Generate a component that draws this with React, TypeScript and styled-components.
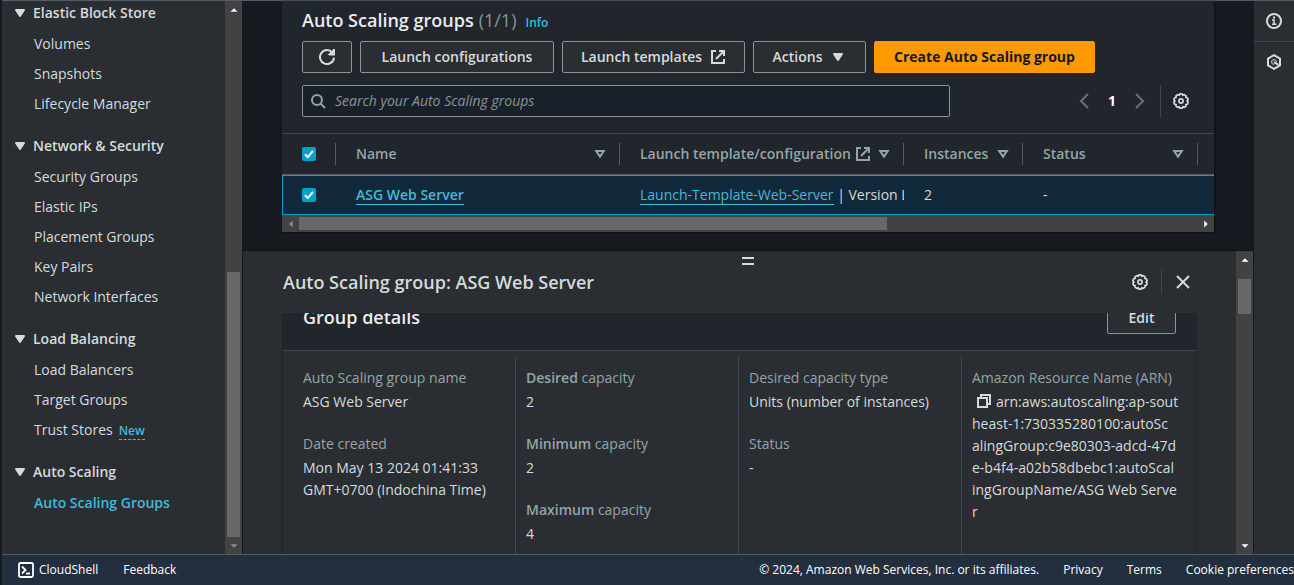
import React from 'react';
import styled, { createGlobalStyle, css } from 'styled-components';

const color = {
  page: '#16191f',
  panel: '#2a2e33',
  card: '#21252c',
  line: '#414750',
  divider: '#545b64',
  outline: '#879596',
  text: '#d5dbdb',
  muted: '#95a5a6',
  bright: '#eaeded',
  link: '#44b9d6',
  accent: '#00a1c9',
  track: '#424242',
  thumb: '#686868',
};

const GlobalStyle = createGlobalStyle`
  *, *::before, *::after { box-sizing: border-box; }
  body {
    margin: 0;
    background: ${color.page};
    color: ${color.text};
    font: 14px/22px "Open Sans", "Noto Sans", sans-serif;
    overflow: hidden;
  }
  h2, h3, ul, dl, dd, p { margin: 0; padding: 0; }
  h2, h3, b { font-weight: 600; }
  ul { list-style: none; }
  a { color: inherit; text-decoration: none; }
  button, input { font: inherit; color: inherit; }
  svg { display: block; flex: none; }
`;

/* ---------- icons ---------- */

const Svg = styled.svg.attrs({ viewBox: '0 0 16 16', 'aria-hidden': true })<{ $size?: number; $w?: number }>`
  width: ${p => p.$size ?? 16}px;
  height: ${p => p.$size ?? 16}px;
  fill: none;
  stroke: currentColor;
  stroke-width: ${p => p.$w ?? 2};
`;

const CaretFilled = () => (
  <Svg><path d="M4 5h8l-4 6z" fill="currentColor" strokeLinejoin="round" /></Svg>
);
const CaretHollow = () => (
  <Svg><path d="M4.2 5h7.6L8 10.6z" /></Svg>
);
const RefreshIcon = () => (
  <Svg><path d="M15 8.6A7 7 0 1 1 13.4 3.6" /><path d="M15 0v5.5H10" /><path d="M11 5 14.5 1.5V5z" fill="currentColor" /></Svg>
);
const ExternalIcon = () => (
  <Svg><path d="M6 2H2v12h12v-4" /><path d="M9 2h5v5" /><path d="M6 10l8-8" /></Svg>
);
const SearchIcon = () => (
  <Svg><circle cx="7" cy="7" r="5" /><path d="M10.6 10.6 15 15" /></Svg>
);
const ChevronIcon = ({ flip = false }: { flip?: boolean }) => (
  <Svg><path d={flip ? 'M4 1l7 7-7 7' : 'M12 1L5 8l7 7'} /></Svg>
);
const CloseIcon = () => (
  <Svg><path d="M2 2l12 12M14 2L2 14" /></Svg>
);
const CopyIcon = () => (
  <Svg><path d="M2 5h9v9H2z" /><path d="M5 5V2h9v9h-3" /></Svg>
);
const gear = Array.from({ length: 10 }, (_, i) => {
  const at = (r: number, deg: number) => {
    const a = (deg * Math.PI) / 180;
    return `${(8 + r * Math.cos(a)).toFixed(2)} ${(8 + r * Math.sin(a)).toFixed(2)}`;
  };
  const d = i * 36 - 90;
  return `${i ? 'L' : 'M'}${at(6, d - 18)}L${at(7.2, d - 9)}L${at(7.2, d + 9)}`;
}).join('') + 'Z';
const SettingsIcon = () => (
  <Svg $w={1.7}><path d={gear} strokeLinejoin="round" /><circle cx="8" cy="8" r="2.1" /></Svg>
);
const InfoIcon = () => (
  <Svg><circle cx="8" cy="8" r="7" /><path d="M6 7h2v4M6 11.2h4.4" strokeWidth="1.6" /><path d="M7 4.5h2" /></Svg>
);
const HexIcon = () => (
  <Svg><path d="M8 1.2l6 3.4v6.8l-6 3.4-6-3.4V4.6z" /><path d="M8 10.4A2.4 2.4 0 1 1 10.4 8" strokeWidth="1" /><path d="M8 8.2l4.5 2.6" /></Svg>
);
const ShellIcon = () => (
  <Svg $w={1.8}><rect x="1" y="1" width="14" height="14" rx="1.5" /><path d="M4 4.5L7.5 8 4 11.5M8 11.5h4" /></Svg>
);

/* ---------- shell ---------- */

const Page = styled.div`
  display: flex;
  flex-direction: column;
  height: 100vh;
  padding-left: 2px;
`;
const Body = styled.div`
  display: flex;
  flex: 1;
  min-height: 0;
  border-top: 1px solid ${color.divider};
`;

/* ---------- scrollbars ---------- */

const Bar = styled.div<{ $axis: 'x' | 'y' }>`
  display: flex;
  flex: none;
  align-items: stretch;
  background: ${color.track};
  ${p => (p.$axis === 'y'
    ? css`flex-direction: column; width: 17px; padding: 0 2px;`
    : css`height: 17px; padding: 2px 0;`)}
`;
const Arrow = styled.span<{ $dim?: boolean }>`
  display: grid;
  place-items: center;
  flex: 0 0 17px;
  color: ${p => (p.$dim ? '#8b8b8b' : '#ffffff')};
`;
const Track = styled.div`
  display: flex;
  flex-direction: inherit;
  flex: 1;
`;
const Before = styled.div`
  flex: none;
`;
const Thumb = styled.div`
  flex: none;
  background: ${color.thumb};
`;
const arrowPaths = { up: 'M4 10h8L8 6z', down: 'M4 6h8l-4 4z', left: 'M10 4v8L6 8z', right: 'M6 4v8l4-4z' };
const ArrowMark = ({ to, dim }: { to: keyof typeof arrowPaths; dim?: boolean }) => (
  <Arrow $dim={dim}><Svg $size={14} $w={0}><path d={arrowPaths[to]} fill="currentColor" /></Svg></Arrow>
);
const Scrollbar = ({ axis, start, size, dim }: { axis: 'x' | 'y'; start: number; size: number; dim?: 'start' | 'end' }) => (
  <Bar $axis={axis} aria-hidden>
    <ArrowMark to={axis === 'y' ? 'up' : 'left'} dim={dim === 'start'} />
    <Track>
      <Before style={{ flexBasis: `${start}%` }} />
      <Thumb style={{ flexBasis: `${size}%` }} />
    </Track>
    <ArrowMark to={axis === 'y' ? 'down' : 'right'} dim={dim === 'end'} />
  </Bar>
);

/* ---------- side navigation ---------- */

const Side = styled.aside`
  display: flex;
  flex: 0 0 241px;
  background: ${color.panel};
  border-right: 1px solid ${color.page};
`;
const Nav = styled.nav`
  display: flex;
  flex-direction: column;
  gap: 20px;
  flex: 1;
  padding: 1px 0 0 10px;
`;
const NavHeading = styled.h3`
  display: flex;
  align-items: center;
  gap: 5px;
  margin-bottom: 9px;
  font-size: 14px;
  line-height: 22px;
`;
const NavList = styled.ul`
  display: flex;
  flex-direction: column;
  gap: 8px;
  padding-left: 22px;
  li { height: 22px; }
`;
const NavLink = styled.a<{ $active?: boolean }>`
  ${p => p.$active && css`color: ${color.link}; font-weight: 600;`}
`;
const NewTag = styled.a`
  margin-left: 6px;
  font-size: 12px;
  font-weight: 600;
  color: ${color.link};
  border-bottom: 1px dashed ${color.link};
`;

const sections = [
  { title: 'Elastic Block Store', items: ['Volumes', 'Snapshots', 'Lifecycle Manager'] },
  { title: 'Network & Security', items: ['Security Groups', 'Elastic IPs', 'Placement Groups', 'Key Pairs', 'Network Interfaces'] },
  { title: 'Load Balancing', items: ['Load Balancers', 'Target Groups', 'Trust Stores'] },
  { title: 'Auto Scaling', items: ['Auto Scaling Groups'] },
];

/* ---------- groups list ---------- */

const Main = styled.main`
  display: flex;
  flex-direction: column;
  flex: 1;
  min-width: 0;
`;
const ListArea = styled.div`
  flex: none;
  padding: 0 39px 18px;
`;
const Card = styled.section`
  background: ${color.card};
  box-shadow: 0 1px 1px 0 #0f1114, 1px 0 1px 0 #0f1114;
`;
const CardHead = styled.div`
  display: flex;
  flex-direction: column;
  padding: 8px 20px 16px;
`;
const Title = styled.h2`
  display: flex;
  align-items: baseline;
  gap: 5px;
  height: 22px;
  margin-bottom: 10px;
  font-size: 18px;
  line-height: 22px;
  color: ${color.bright};
`;
const Count = styled.span`
  font-weight: 400;
  color: ${color.outline};
`;
const InfoLink = styled.a`
  margin-left: 4px;
  font-size: 12px;
  font-weight: 600;
  color: ${color.link};
`;
const Row = styled.div<{ $gap?: number }>`
  display: flex;
  align-items: center;
  gap: ${p => p.$gap ?? 8}px;
`;
const Button = styled.button<{ $primary?: boolean; $width?: number }>`
  display: flex;
  align-items: center;
  justify-content: center;
  gap: 8px;
  height: 32px;
  width: ${p => (p.$width ? `${p.$width}px` : 'auto')};
  padding: 0;
  border: 1px solid ${p => (p.$primary ? '#ff9900' : color.outline)};
  border-radius: 2px;
  background: ${p => (p.$primary ? '#ff9900' : color.panel)};
  color: ${p => (p.$primary ? color.page : color.text)};
  font-weight: ${p => (p.$primary ? 700 : 600)};
  white-space: nowrap;
`;
const IconButton = styled.button<{ $dim?: boolean }>`
  display: flex;
  padding: 0;
  border: 0;
  background: none;
  color: ${p => (p.$dim ? '#687078' : color.text)};
`;
const Filter = styled(Row)`
  margin-top: 12px;
  justify-content: space-between;
`;
const SearchBox = styled.label`
  display: flex;
  align-items: center;
  gap: 9px;
  flex: 0 1 648px;
  height: 32px;
  padding: 0 7px;
  border: 1px solid ${color.outline};
  border-radius: 2px;
  background: #1a2029;
  color: ${color.muted};
`;
const SearchInput = styled.input`
  flex: 1;
  min-width: 0;
  padding: 0;
  border: 0;
  outline: 0;
  background: none;
  &::placeholder { color: ${color.outline}; font-style: italic; opacity: 1; }
`;
const Pager = styled(Row)`
  padding-right: 5px;
`;
const PageNumber = styled.button`
  width: 24px;
  padding: 0;
  border: 0;
  background: none;
  color: #ffffff;
  font-weight: 700;
`;
const Rule = styled.span<{ $h: number }>`
  width: 1px;
  height: ${p => p.$h}px;
  background: ${color.line};
`;

const TableClip = styled.div`
  overflow: hidden;
`;
const Table = styled.table`
  width: 1423px;
  table-layout: fixed;
  border-collapse: separate;
  border-spacing: 0;
`;
const Th = styled.th<{ $w?: number }>`
  width: ${p => (p.$w ? `${p.$w}px` : 'auto')};
  height: 42px;
  padding: 0;
  border-top: 1px solid ${color.line};
  border-bottom: 1px solid ${color.divider};
  color: ${color.muted};
  font-weight: 600;
  text-align: left;
`;
const ThInner = styled.div<{ $check?: boolean }>`
  display: flex;
  align-items: center;
  justify-content: space-between;
  height: 22px;
  padding: ${p => (p.$check ? '0 0 0 20px' : '0 11px 0 20px')};
  border-right: 1px solid ${color.divider};
  white-space: nowrap;
`;
const Td = styled.td`
  height: 40px;
  padding: 0 0 0 20px;
  border: 1px solid ${color.accent};
  border-width: 1px 0;
  background: #12293b;
  overflow: hidden;
  white-space: nowrap;
  &:first-child { border-left-width: 1px; padding-left: 19px; }
`;
const Check = styled.input.attrs({ type: 'checkbox', defaultChecked: true })`
  appearance: none;
  display: block;
  width: 14px;
  height: 14px;
  margin: 0;
  border-radius: 2px;
  background: ${color.accent} url("data:image/svg+xml,%3Csvg xmlns='http://www.w3.org/2000/svg' viewBox='0 0 14 14'%3E%3Cpath d='M3 7.2l2.8 2.9L11 3.8' fill='none' stroke='white' stroke-width='2'/%3E%3C/svg%3E");
`;
const CellLink = styled.a<{ $bold?: boolean }>`
  color: ${color.link};
  font-weight: ${p => (p.$bold ? 600 : 400)};
  border-bottom: 1px solid ${color.link};
`;

/* ---------- split panel ---------- */

const Split = styled.section`
  display: flex;
  flex: 1;
  min-height: 0;
  border-top: 1px solid #0f1114;
  background: ${color.panel};
`;
const SplitMain = styled.div`
  display: flex;
  flex-direction: column;
  flex: 1;
  min-width: 0;
`;
const Handle = styled.button`
  align-self: center;
  flex: none;
  width: 12px;
  height: 8px;
  margin: 6px 0 0 16px;
  padding: 0;
  border: 2px solid ${color.text};
  border-width: 2px 0;
  background: none;
`;
const SplitHead = styled.header`
  display: flex;
  align-items: center;
  justify-content: space-between;
  flex: none;
  height: 48px;
  padding: 0 45px 14px 40px;
`;
const SplitTitle = styled.h2`
  font-size: 18px;
  line-height: 22px;
`;
const SplitBody = styled.div`
  flex: 1;
  min-height: 0;
  overflow: hidden;
  padding: 0 39px;
`;
const Details = styled.div`
  min-height: 100%;
  margin-top: -20px;
  border: 1px solid #1f2227;
  border-bottom: 0;
`;
const DetailsHead = styled.div`
  display: flex;
  align-items: center;
  justify-content: space-between;
  height: 57px;
  padding: 0 20px 9px;
  background: ${color.card};
  border-bottom: 1px solid ${color.line};
  h3 { font-size: 18px; line-height: 22px; padding-bottom: 2px; color: ${color.bright}; }
`;
const Columns = styled.div`
  display: grid;
  grid-template-columns: repeat(4, minmax(0, 1fr));
  padding: 6px 12px 0 9px;
`;
const Column = styled.dl`
  display: flex;
  flex-direction: column;
  gap: 20px;
  height: 220px;
  padding: 10px 10px 0 11px;
  & + & { border-left: 1px solid ${color.line}; padding-left: 10px; }
`;
const Term = styled.dt`
  margin-bottom: 2px;
  color: ${color.muted};
`;
const Arn = styled.dd`
  white-space: nowrap;
  svg { display: inline-block; vertical-align: -2px; margin: 0 4px; }
`;

/* ---------- tools rail and footer ---------- */

const Rail = styled.aside`
  flex: 0 0 41px;
  background: ${color.panel};
  border-left: 1px solid ${color.page};
`;
const RailButton = styled(IconButton)`
  justify-content: center;
  align-items: center;
  width: 100%;
  height: 40px;
  & + & { height: 41px; border-top: 1px solid ${color.line}; }
`;
const Footer = styled.footer`
  display: flex;
  align-items: center;
  flex: none;
  height: 31px;
  border-top: 1px solid ${color.divider};
  background: #232f3e;
  color: #ffffff;
  font-size: 12px;
  white-space: nowrap;
  overflow: hidden;
`;
const FooterLeft = styled(Row)`
  padding-left: 16px;
  a { display: flex; align-items: center; gap: 5px; }
`;
const FooterRight = styled(Row)`
  margin-left: auto;
`;

const Pair = ({ label, children }: { label: React.ReactNode; children: React.ReactNode }) => (
  <div><Term>{label}</Term><dd>{children}</dd></div>
);

const headers = [
  { label: 'Name', width: 284 },
  { label: 'Launch template/configuration', width: 284, external: true },
  { label: 'Instances', width: 119 },
  { label: 'Status', width: 175 },
];

export default function App() {
  return (
    <Page>
      <GlobalStyle />
      <Body>
        <Side>
          <Nav aria-label="EC2">
            {sections.map(s => (
              <div key={s.title}>
                <NavHeading><CaretFilled />{s.title}</NavHeading>
                <NavList>
                  {s.items.map(item => (
                    <li key={item}>
                      <NavLink href="#" $active={item === 'Auto Scaling Groups'}>{item}</NavLink>
                      {item === 'Trust Stores' && <NewTag href="#">New</NewTag>}
                    </li>
                  ))}
                </NavList>
              </div>
            ))}
          </Nav>
          <Scrollbar axis="y" start={49} size={51} dim="end" />
        </Side>

        <Main>
          <ListArea>
            <Card>
              <CardHead>
                <Title>Auto Scaling groups <Count>(1/1)</Count><InfoLink href="#">Info</InfoLink></Title>
                <Row>
                  <Button $width={50} aria-label="Refresh"><RefreshIcon /></Button>
                  <Button $width={194}>Launch configurations</Button>
                  <Button $width={183}>Launch templates <ExternalIcon /></Button>
                  <Button $width={113}>Actions <CaretFilled /></Button>
                  <Button $width={221} $primary>Create Auto Scaling group</Button>
                </Row>
                <Filter>
                  <SearchBox>
                    <SearchIcon />
                    <SearchInput type="text" placeholder="Search your Auto Scaling groups" aria-label="Search your Auto Scaling groups" />
                  </SearchBox>
                  <Pager $gap={12}>
                    <Row>
                      <IconButton $dim aria-label="Previous page"><ChevronIcon /></IconButton>
                      <PageNumber>1</PageNumber>
                      <IconButton $dim aria-label="Next page"><ChevronIcon flip /></IconButton>
                    </Row>
                    <Rule $h={32} />
                    <IconButton aria-label="Preferences"><SettingsIcon /></IconButton>
                  </Pager>
                </Filter>
              </CardHead>
              <TableClip>
                <Table>
                  <thead>
                    <tr>
                      <Th $w={54}><ThInner $check><Check aria-label="Select all" /></ThInner></Th>
                      {headers.map(h => (
                        <Th key={h.label} $w={h.width}>
                          <ThInner>
                            <Row $gap={4}>{h.label}{h.external && <ExternalIcon />}</Row>
                            <CaretHollow />
                          </ThInner>
                        </Th>
                      ))}
                      <Th />
                    </tr>
                  </thead>
                  <tbody>
                    <tr>
                      <Td><Check aria-label="Select ASG Web Server" /></Td>
                      <Td><CellLink href="#" $bold>ASG Web Server</CellLink></Td>
                      <Td><CellLink href="#">Launch-Template-Web-Server</CellLink> | Version Latest</Td>
                      <Td>2</Td>
                      <Td>-</Td>
                      <Td />
                    </tr>
                  </tbody>
                </Table>
              </TableClip>
              <Scrollbar axis="x" start={0} size={65.5} dim="start" />
            </Card>
          </ListArea>

          <Split>
            <SplitMain>
              <Handle aria-label="Resize panel" />
              <SplitHead>
                <SplitTitle>Auto Scaling group: ASG Web Server</SplitTitle>
                <Row $gap={13}>
                  <IconButton aria-label="Panel preferences"><SettingsIcon /></IconButton>
                  <Rule $h={24} />
                  <IconButton aria-label="Close panel"><CloseIcon /></IconButton>
                </Row>
              </SplitHead>
              <SplitBody>
                <Details>
                  <DetailsHead>
                    <h3>Group details</h3>
                    <Button $width={69}>Edit</Button>
                  </DetailsHead>
                  <Columns>
                    <Column>
                      <Pair label="Auto Scaling group name">ASG Web Server</Pair>
                      <Pair label="Date created">Mon May 13 2024 01:41:33<br />GMT+0700 (Indochina Time)</Pair>
                    </Column>
                    <Column>
                      <Pair label={<><b>Desired</b> capacity</>}>2</Pair>
                      <Pair label={<><b>Minimum</b> capacity</>}>2</Pair>
                      <Pair label={<><b>Maximum</b> capacity</>}>4</Pair>
                    </Column>
                    <Column>
                      <Pair label="Desired capacity type">Units (number of instances)</Pair>
                      <Pair label="Status">-</Pair>
                    </Column>
                    <Column>
                      <div>
                        <Term>Amazon Resource Name (ARN)</Term>
                        <Arn>
                          <CopyIcon />arn:aws:autoscaling:ap-sout<br />
                          heast-1:730335280100:autoSc<br />
                          alingGroup:c9e80303-adcd-47d<br />
                          e-b4f4-a02b58dbebc1:autoScal<br />
                          ingGroupName/ASG Web Serve<br />
                          r
                        </Arn>
                      </div>
                    </Column>
                  </Columns>
                </Details>
              </SplitBody>
            </SplitMain>
            <Scrollbar axis="y" start={4} size={13} />
          </Split>
        </Main>

        <Rail>
          <RailButton aria-label="Info"><InfoIcon /></RailButton>
          <RailButton aria-label="Diagnostics"><HexIcon /></RailButton>
        </Rail>
      </Body>

      <Footer>
        <FooterLeft $gap={25}>
          <a href="#"><ShellIcon />CloudShell</a>
          <a href="#">Feedback</a>
        </FooterLeft>
        <FooterRight $gap={24}>
          <span>© 2024, Amazon Web Services, Inc. or its affiliates.</span>
          <a href="#">Privacy</a>
          <a href="#">Terms</a>
          <a href="#">Cookie preferences</a>
        </FooterRight>
      </Footer>
    </Page>
  );
}
